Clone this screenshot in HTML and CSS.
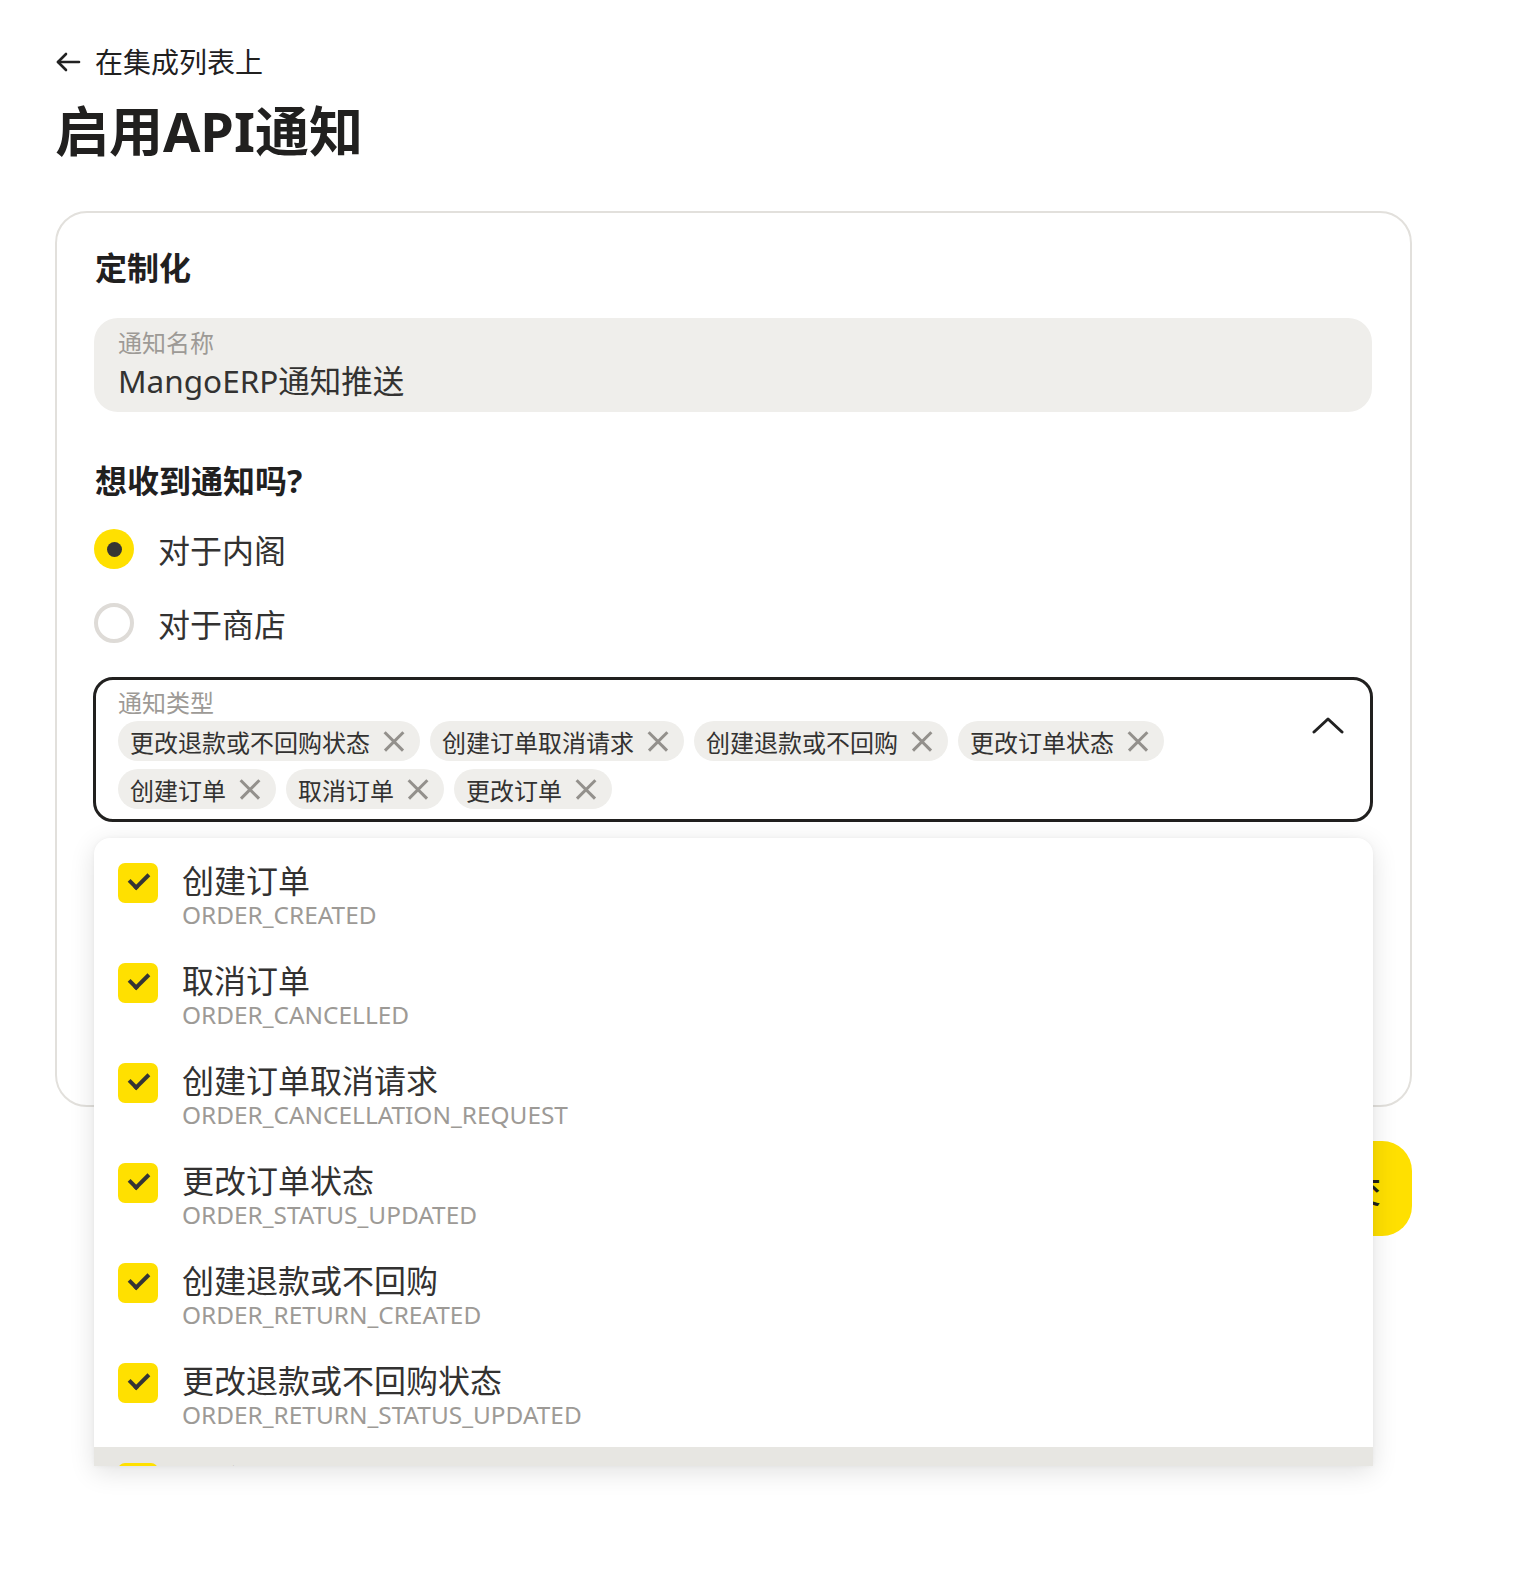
FILE: index.html
```html
<!DOCTYPE html>
<html lang="zh">
<head>
    <meta charset="UTF-8">
    <meta name="viewport" content="width=device-width, initial-scale=1.0">
    <title>启用API通知</title>
    <link rel="stylesheet" href="styles.css">
</head>
<body>
    <div class="page">
        <a class="back-link" href="#">
            <svg class="back-icon" width="26" height="22" viewBox="0 0 26 22" fill="none" stroke="#222" stroke-width="2.6" stroke-linecap="round" stroke-linejoin="round">
                <path d="M24 11H3"/>
                <path d="M11 3L3 11l8 8"/>
            </svg>
            <span>在集成列表上</span>
        </a>
        <h1 class="page-title">启用API通知</h1>

        <div class="card">
            <h2 class="section-title">定制化</h2>

            <div class="field">
                <div class="field-label">通知名称</div>
                <div class="field-value">MangoERP通知推送</div>
            </div>

            <h2 class="section-title question">想收到通知吗?</h2>

            <div class="radio-group">
                <label class="radio checked"><span class="radio-mark"></span>对于内阁</label>
                <label class="radio"><span class="radio-mark"></span>对于商店</label>
            </div>

            <div class="select-wrap">
                <div class="select open">
                    <div class="select-body">
                        <div class="field-label">通知类型</div>
                        <div class="chips">
                            <span class="chip">更改退款或不回购状态<span class="chip-x"></span></span>
                            <span class="chip">创建订单取消请求<span class="chip-x"></span></span>
                            <span class="chip">创建退款或不回购<span class="chip-x"></span></span>
                            <span class="chip">更改订单状态<span class="chip-x"></span></span>
                            <span class="chip">创建订单<span class="chip-x"></span></span>
                            <span class="chip">取消订单<span class="chip-x"></span></span>
                            <span class="chip">更改订单<span class="chip-x"></span></span>
                        </div>
                    </div>
                    <svg class="chevron" width="32" height="18" viewBox="0 0 32 18" fill="none" stroke="#222" stroke-width="3" stroke-linecap="round" stroke-linejoin="round">
                        <path d="M2 16L16 3l14 13"/>
                    </svg>
                </div>

                <!-- open options list -->
                <div class="dropdown">
                    <div class="option">
                        <span class="checkbox"></span>
                        <div class="option-text">
                            <div class="option-title">创建订单</div>
                            <div class="option-code">ORDER_CREATED</div>
                        </div>
                    </div>
                    <div class="option">
                        <span class="checkbox"></span>
                        <div class="option-text">
                            <div class="option-title">取消订单</div>
                            <div class="option-code">ORDER_CANCELLED</div>
                        </div>
                    </div>
                    <div class="option">
                        <span class="checkbox"></span>
                        <div class="option-text">
                            <div class="option-title">创建订单取消请求</div>
                            <div class="option-code">ORDER_CANCELLATION_REQUEST</div>
                        </div>
                    </div>
                    <div class="option">
                        <span class="checkbox"></span>
                        <div class="option-text">
                            <div class="option-title">更改订单状态</div>
                            <div class="option-code">ORDER_STATUS_UPDATED</div>
                        </div>
                    </div>
                    <div class="option">
                        <span class="checkbox"></span>
                        <div class="option-text">
                            <div class="option-title">创建退款或不回购</div>
                            <div class="option-code">ORDER_RETURN_CREATED</div>
                        </div>
                    </div>
                    <div class="option">
                        <span class="checkbox"></span>
                        <div class="option-text">
                            <div class="option-title">更改退款或不回购状态</div>
                            <div class="option-code">ORDER_RETURN_STATUS_UPDATED</div>
                        </div>
                    </div>
                    <div class="option hover">
                        <span class="checkbox"></span>
                        <div class="option-text">
                            <div class="option-title">更改订单</div>
                            <div class="option-code">ORDER_UPDATED</div>
                        </div>
                    </div>
                </div>
            </div>
        </div>

        <div class="actions">
            <button class="btn-primary">提交</button>
        </div>
    </div>
</body>
</html>
```

FILE: styles.css
```css
body {
    margin: 0;
    background-color: #fff;
    color: #21201f;
    font-family: "Noto Sans", "Noto Sans CJK SC", sans-serif;
}

.page {
    width: 1357px;
    min-height: 1570px;
    box-sizing: content-box;
    padding: 44px 0 0 55px;
}

.back-link {
    display: flex;
    align-items: center;
    gap: 14px;
    height: 36px;
    color: #21201f;
    text-decoration: none;
    font-size: 28px;
    line-height: 36px;
}

.back-icon {
    flex: none;
}

.page-title {
    margin: 19px 0 0;
    font-size: 54px;
    line-height: 64px;
    font-weight: 700;
}

/* Settings card */
.card {
    margin-top: 48px;
    min-height: 896px;
    box-sizing: border-box;
    border: 2px solid #e2e0dc;
    border-radius: 32px;
    padding: 36px 38px 40px;
}

.section-title {
    margin: 0;
    font-size: 32px;
    line-height: 38px;
    font-weight: 700;
}

.section-title.question {
    margin-top: 50px;
}

.field {
    margin-top: 31px;
    margin-left: -1px;
    background-color: #efeeeb;
    border-radius: 24px;
    padding: 11px 24px;
}

.field-label {
    font-size: 24px;
    line-height: 28px;
    color: #9d9a96;
}

.field-value {
    margin-top: 4px;
    font-size: 31.5px;
    line-height: 40px;
    color: #333231;
}

/* Radio buttons */
.radio-group {
    margin-top: 25px;
    display: flex;
    flex-direction: column;
    gap: 26px;
}

.radio {
    display: flex;
    align-items: center;
    gap: 24px;
    height: 48px;
    margin-left: -1px;
    font-size: 32px;
    color: #333231;
}

.radio-mark {
    width: 40px;
    height: 40px;
    box-sizing: border-box;
    border-radius: 50%;
    border: 4px solid #dedbd7;
    display: flex;
    align-items: center;
    justify-content: center;
}

.radio.checked .radio-mark {
    border: none;
    background-color: #ffe000;
}

.radio.checked .radio-mark::after {
    content: "";
    width: 15px;
    height: 15px;
    border-radius: 50%;
    background-color: #363534;
}

/* Multi select */
.select-wrap {
    position: relative;
    margin-top: 30px;
}

.select {
    margin: 0 -1px 0 -2px;
    border: 3px solid #21201f;
    border-radius: 20px;
    padding: 10px 26px 10px 22px;
    display: flex;
    align-items: flex-start;
}

.select-body {
    flex: 1;
}

.select .field-label {
    line-height: 26px;
}

.chevron {
    flex: none;
    margin-top: 26px;
}

.chips {
    margin-top: 5px;
    display: flex;
    flex-wrap: wrap;
    gap: 8px 10px;
}

.chip {
    display: inline-flex;
    align-items: center;
    gap: 13px;
    height: 40px;
    padding: 0 15px 0 12px;
    border-radius: 20px;
    background-color: #efeeeb;
    font-size: 24px;
    color: #333231;
}

.chip-x {
    position: relative;
    width: 22px;
    height: 22px;
}

.chip-x::before,
.chip-x::after {
    content: "";
    position: absolute;
    left: -2px;
    top: 10px;
    width: 26px;
    height: 2.5px;
    background-color: #93908c;
    transform: rotate(45deg);
}

.chip-x::after {
    transform: rotate(-45deg);
}

.dropdown {
    position: absolute;
    top: calc(100% + 16px);
    left: -1px;
    right: -1px;
    height: 628px;
    box-sizing: border-box;
    padding-top: 9px;
    overflow: hidden;
    background-color: #fff;
    border-radius: 16px 16px 0 0;
    box-shadow: 0 6px 26px rgba(0, 0, 0, 0.12), 0 0 4px rgba(0, 0, 0, 0.04);
    z-index: 10;
}

.option {
    display: flex;
    align-items: flex-start;
    gap: 24px;
    padding: 16px 24px;
}

.option.hover {
    background-color: #e7e6e2;
}

.checkbox {
    flex: none;
    width: 40px;
    height: 40px;
    border-radius: 7px;
    background-color: #ffe000;
    position: relative;
}

.checkbox::after {
    content: "";
    position: absolute;
    left: 11px;
    top: 10px;
    width: 16px;
    height: 8px;
    border-left: 4px solid #363534;
    border-bottom: 4px solid #363534;
    transform: rotate(-45deg);
}

.option-title {
    font-size: 32px;
    line-height: 36px;
    color: #333231;
}

.option-code {
    font-size: 24.4px;
    line-height: 32px;
    color: #9d9a96;
}

.actions {
    margin-top: 34px;
    display: flex;
    justify-content: flex-end;
}

.btn-primary {
    height: 95px;
    padding: 0 31px;
    border: none;
    border-radius: 30px;
    background-color: #ffe000;
    color: #21201f;
    font-family: inherit;
    font-size: 32px;
    font-weight: 500;
}
```
